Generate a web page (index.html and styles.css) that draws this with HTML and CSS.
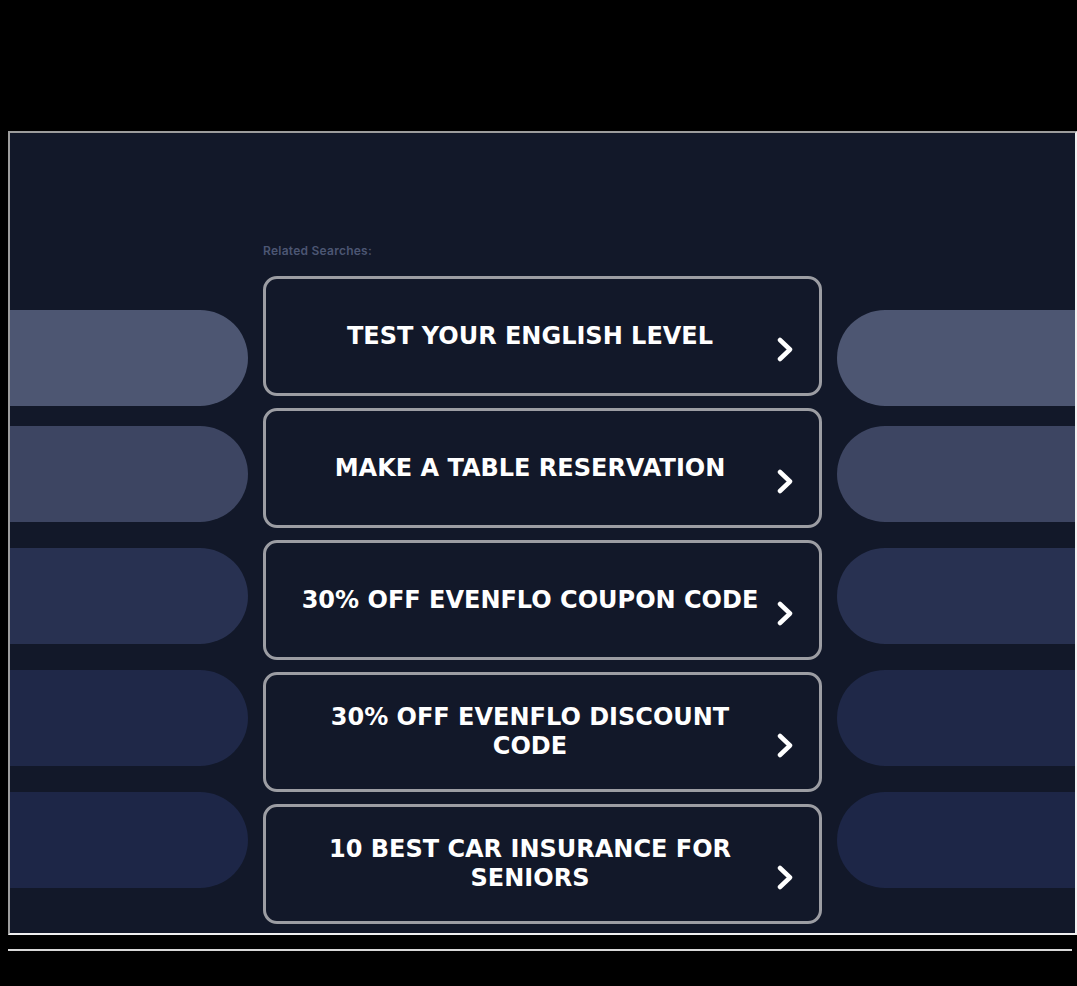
FILE: index.html
```html
<!DOCTYPE html>
<html lang="en">
<head>
<meta charset="utf-8">
<title>Related Searches</title>
<link rel="stylesheet" href="styles.css">
</head>
<body>
<div class="top-space"></div>
<div class="frame">
  <div class="pills">
    <div class="pill pill-1"></div>
    <div class="pill pill-2"></div>
    <div class="pill pill-3"></div>
    <div class="pill pill-4"></div>
    <div class="pill pill-5"></div>
  </div>
  <div class="center">
    <div class="label">Related Searches:</div>
    <a class="btn" href="#"><span class="btn-text">TEST YOUR ENGLISH LEVEL</span><svg class="chev" viewBox="0 0 16 25" width="16" height="25"><path d="M3 3 L13 12.5 L3 22" /></svg></a>
    <a class="btn" href="#"><span class="btn-text">MAKE A TABLE RESERVATION</span><svg class="chev" viewBox="0 0 16 25" width="16" height="25"><path d="M3 3 L13 12.5 L3 22" /></svg></a>
    <a class="btn" href="#"><span class="btn-text">30% OFF EVENFLO COUPON CODE</span><svg class="chev" viewBox="0 0 16 25" width="16" height="25"><path d="M3 3 L13 12.5 L3 22" /></svg></a>
    <a class="btn" href="#"><span class="btn-text">30% OFF EVENFLO DISCOUNT CODE</span><svg class="chev" viewBox="0 0 16 25" width="16" height="25"><path d="M3 3 L13 12.5 L3 22" /></svg></a>
    <a class="btn" href="#"><span class="btn-text">10 BEST CAR INSURANCE FOR SENIORS</span><svg class="chev" viewBox="0 0 16 25" width="16" height="25"><path d="M3 3 L13 12.5 L3 22" /></svg></a>
  </div>
  <div class="pills pills-right">
    <div class="pill pill-1"></div>
    <div class="pill pill-2"></div>
    <div class="pill pill-3"></div>
    <div class="pill pill-4"></div>
    <div class="pill pill-5"></div>
  </div>
</div>
<div class="rule"></div>
</body>
</html>
```
FILE: styles.css
```css
html, body {
  background: #000;
}
html {
  overflow: hidden;
}
body {
  margin: 8px 0 8px 8px;
  font-family: "DejaVu Sans", sans-serif;
}
.top-space {
  height: 123px;
}
.frame {
  width: 1065px;
  height: 800px;
  border-style: solid;
  border-width: 2px;
  border-color: #9c9c9c #f0f0f0 #f0f0f0 #9c9c9c;
  background: #121829;
  display: grid;
  grid-template-columns: 238px 559px 238px;
  column-gap: 15px;
  overflow: hidden;
}
.pills {
  display: flex;
  flex-direction: column;
  gap: 26px;
  padding-top: 177px;
}
.pill {
  height: 96px;
  border-radius: 0 48px 48px 0;
}
.pills-right .pill {
  border-radius: 48px 0 0 48px;
}
.pill-1 { background: #4d5672; margin-bottom: -6px; }
.pill-2 { background: #3d4562; }
.pill-3 { background: #283151; }
.pill-4 { background: #1f2848; }
.pill-5 { background: #1d2647; }
.center {
  display: flex;
  flex-direction: column;
  padding-top: 110px;
}
.label {
  font-family: "Inter", sans-serif;
  font-weight: 600;
  font-size: 12px;
  line-height: 16px;
  letter-spacing: 0.25px;
  color: #4c5673;
  margin-bottom: 17px;
}
.btn {
  position: relative;
  box-sizing: border-box;
  height: 120px;
  margin-bottom: 12px;
  border: 3px solid #9c9da3;
  border-radius: 14px;
  display: flex;
  align-items: center;
  justify-content: center;
  padding: 0 54px 0 29px;
  text-decoration: none;
  color: #fff;
}
.btn-text {
  font-family: "DejaVu Sans", sans-serif;
  font-weight: bold;
  font-size: 24px;
  line-height: 29px;
  letter-spacing: 0;
  text-align: center;
}
.chev {
  position: absolute;
  right: 26px;
  top: calc(50% + 1px);
}
.chev path {
  fill: none;
  stroke: #fff;
  stroke-width: 4.5;
  stroke-linecap: round;
  stroke-linejoin: round;
}
.rule {
  width: 1064px;
  height: 2px;
  margin-top: 14px;
  background: #d8d8d8;
}
```
